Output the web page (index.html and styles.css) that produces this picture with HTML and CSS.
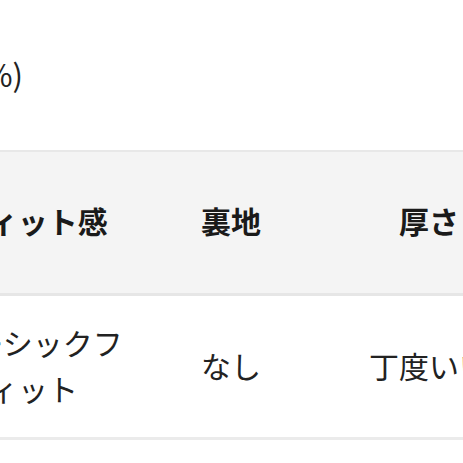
FILE: index.html
```html
<!DOCTYPE html>
<html lang="ja">
<head>
<meta charset="utf-8">
<link rel="stylesheet" href="styles.css">
</head>
<body>
<div class="caption"><span class="caption-text">素材：綿(100%)</span></div>
<div class="table-wrap">
<table class="spec">
<thead>
<tr><th>フィット感</th><th>裏地</th><th>厚さ</th></tr>
</thead>
<tbody>
<tr><td>ベーシックフィット</td><td>なし</td><td>丁度いい</td></tr>
</tbody>
</table>
</div>
</body>
</html>
```
FILE: styles.css
```css
html, body {
  margin: 0;
  padding: 0;
  background: #ffffff;
}
body {
  width: 463px;
  height: 463px;
  overflow: hidden;
  font-family: "Noto Sans CJK JP", "Noto Sans", sans-serif;
  color: #222222;
}
.caption {
  display: flex;
  justify-content: flex-end;
  width: 23px;
  height: 40px;
  margin-top: 54px;
  font-size: 31px;
  line-height: 40px;
  white-space: nowrap;
}
.table-wrap {
  margin-top: 56px;
  margin-left: -66px;
}
.spec {
  border-collapse: collapse;
  table-layout: fixed;
  width: 594px;
}
.spec th, .spec td {
  width: 182px;
  padding: 0 8px;
  text-align: center;
  vertical-align: middle;
  font-size: 30px;
  line-height: 46px;
}
.spec th {
  height: 136px;
  padding-bottom: 5px;
  background: #f4f4f4;
  color: #1a1a1a;
  font-weight: 700;
  border-top: 2px solid #e8e8e8;
  border-bottom: 3px solid #e6e6e6;
}
.spec td {
  height: 137px;
  padding-bottom: 4px;
  font-weight: 400;
  border-bottom: 3px solid #ebebeb;
}
```
